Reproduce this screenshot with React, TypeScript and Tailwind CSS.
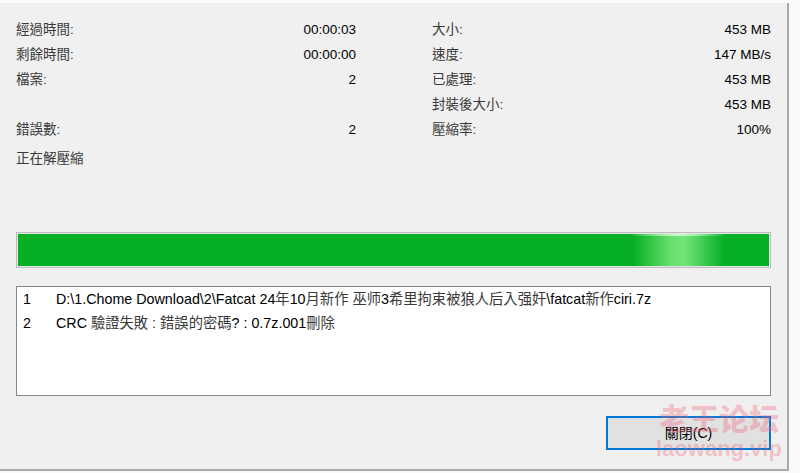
import React from "react";

const font = { fontFamily: '"Liberation Sans", "Noto Sans CJK TC", sans-serif' };

function Row({ label, value }: { label: string; value?: string }) {
  return (
    <div className="flex h-[25px] items-center justify-between">
      <span className="text-[#3a3a3a]">{label}</span>
      <span className="text-black">{value}</span>
    </div>
  );
}

export default function App() {
  return (
    <div className="relative h-[473px] w-[800px] overflow-hidden bg-[#f9f9f9] pt-[3px] text-[13.5px]" style={font}>
      <div className="flex h-[468px] w-[789px] flex-col border-b-2 border-r-2 border-[#a9a9a9] bg-[#f0f0f0] px-[16px] pt-[14.5px]">
        <div className="grid grid-cols-[340px_339px] gap-x-[76px]">
          <div className="flex flex-col">
            <Row label="經過時間:" value="00:00:03" />
            <Row label="剩餘時間:" value="00:00:00" />
            <Row label="檔案:" value="2" />
            <div className="h-[25px]" />
            <Row label="錯誤數:" value="2" />
          </div>
          <div className="flex flex-col">
            <Row label="大小:" value="453 MB" />
            <Row label="速度:" value="147 MB/s" />
            <Row label="已處理:" value="453 MB" />
            <Row label="封裝後大小:" value="453 MB" />
            <Row label="壓縮率:" value="100%" />
          </div>
        </div>
        <div className="mt-[4px] flex h-[25px] items-center text-[#3a3a3a]">正在解壓縮</div>

        <div className="mt-[60.5px] h-[36px] w-[755px] border border-[#bcbcbc] bg-[#e6e6e6] p-px">
          <div className="relative h-full w-full overflow-hidden bg-[#06b025]">
            <div className="absolute left-[616px] top-0 h-full w-[90px] bg-[linear-gradient(90deg,rgba(120,230,120,0)_0%,rgba(120,230,120,0.85)_40%,rgba(130,235,130,0.9)_55%,rgba(120,230,120,0)_100%)]" />
            <div className="absolute left-[610px] top-0 h-[2px] w-[100px] bg-[linear-gradient(90deg,rgba(255,255,255,0)_0%,rgba(230,255,230,0.8)_50%,rgba(255,255,255,0)_100%)]" />
          </div>
        </div>

        <div className="mt-[18px] h-[110px] w-[755px] border border-[#828790] bg-white pt-[1px] text-[14.3px] text-black">
          <div className="flex h-[24px] items-center">
            <span className="w-[39px] pl-[6px]">1</span>
            <span>D:\1.Chome Download\2\Fatcat 24<span className="text-[#3a3a3a]">年</span>10<span className="text-[#3a3a3a]">月新作 巫师</span>3<span className="text-[#3a3a3a]">希里拘束被狼人后入强奸</span>\fatcat<span className="text-[#3a3a3a]">新作</span>ciri.7z</span>
          </div>
          <div className="flex h-[24px] items-center">
            <span className="w-[39px] pl-[6px]">2</span>
            <span>CRC <span className="text-[#3a3a3a]">驗證失敗 : 錯誤的密碼</span>? : 0.7z.001<span className="text-[#3a3a3a]">刪除</span></span>
          </div>
        </div>

        <div className="mt-[20px] flex justify-end">
          <button className="flex h-[34px] w-[165px] items-center justify-center border-2 border-[#0078d7] bg-[#e1e1e1] text-[14px] text-black">
            關閉(C)
          </button>
        </div>
      </div>

      <div className="pointer-events-none absolute left-[656px] top-[402px] flex flex-col items-center leading-none text-[rgba(240,90,110,0.32)]">
        <span className="text-[30px] font-black" style={{ fontFamily: '"Noto Sans CJK SC", sans-serif' }}>老王论坛</span>
        <span className="mt-[6px] text-[22px] font-bold" style={{ fontFamily: '"Liberation Sans", sans-serif' }}>laowang.vip</span>
      </div>
    </div>
  );
}
